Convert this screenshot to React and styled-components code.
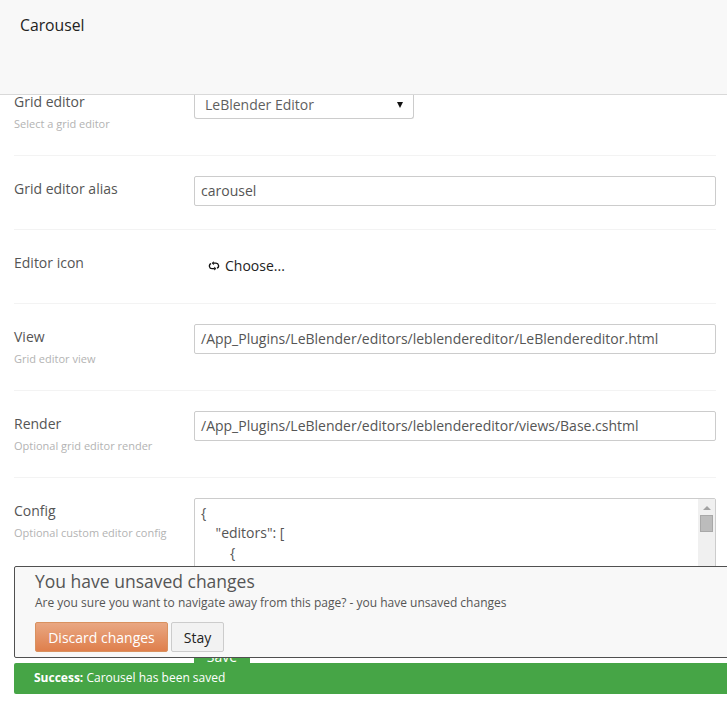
import React from "react";
import styled, { createGlobalStyle } from "styled-components";

const Global = createGlobalStyle`
  html, body { margin: 0; padding: 0; width: 727px; height: 716px; overflow: hidden; background: #fff; }
  * { box-sizing: border-box; }
  body { font-family: "Open Sans", "Liberation Sans", sans-serif; font-size: 14px; color: #515151; }
`;
const Page = styled.div`
  position: relative; width: 727px; height: 716px; overflow: hidden;
  display: flex; flex-direction: column;
`;
const Header = styled.header`
  flex: none; height: 95px; background: #f8f8f8; border-bottom: 1px solid #d9d9d9;
  padding: 15px 20px; font-size: 15.75px; line-height: 20px; color: #222; position: relative; z-index: 1;
`;
const Form = styled.main`
  flex: 1; min-height: 0; overflow: hidden; padding: 0 11px 0 14px;
`;
const Row = styled.section`
  display: grid; grid-template-columns: 180px 1fr; height: ${p => p.$h}px;
  padding-top: ${p => p.$top}px; border-bottom: ${p => (p.$last ? "none" : "1px solid #f3f3f3")};
`;
const LabelCol = styled.div`display: flex; flex-direction: column; margin-top: ${p => p.$offset}px;`;
const Label = styled.label`font-size: 14px; line-height: 20px; color: #555;`;
const Hint = styled.small`font-size: 11px; line-height: 16px; margin-top: 4px; color: #b3b3b3;`;
const SelectBox = styled.div`
  width: 220px; height: 24px; padding: 0 10px 4px; display: flex; align-items: center; justify-content: space-between;
  border: 1px solid #ccc; border-top: none; border-radius: 0 0 3px 3px; background: #fff; color: #5f5f5f; font-size: 14px; line-height: 20px;
`;
const Caret = styled.span`width: 0; height: 0; border: 3.5px solid transparent; border-top: 6px solid #111; border-bottom: 0;`;
const Field = styled.div`
  height: 30px; border: 1px solid #ccc; border-radius: 2px; padding: 0 6px 1px;
  display: flex; align-items: center; font-size: 14px; color: #555; white-space: nowrap; overflow: hidden;
`;
const IconButton = styled.div`
  display: flex; align-items: center; gap: 5px; padding: 1px 0 0 14px; height: 30px; color: #222; font-size: 14px;
`;
const CodeBox = styled.div`
  display: flex; height: 152px; border: 1px solid #ccc; border-radius: 2px; overflow: hidden;
`;
const Code = styled.pre`
  flex: 1; margin: 0; padding: 4px 6px; font-family: "Open Sans", "Liberation Sans", sans-serif; font-size: 14px; line-height: 20px; color: #555;
`;
const Scrollbar = styled.div`
  flex: none; width: 17px; background: #f0f0f0; display: flex; flex-direction: column; align-items: center; padding-top: 7px;
`;
const ArrowUp = styled.span`width: 0; height: 0; border: 4px solid transparent; border-bottom: 4px solid #a3a3a3; border-top: 0;`;
const Thumb = styled.span`width: 13px; height: 17px; margin-top: 5px; background: #bcbcbc; border: 1px solid #a8a8a8;`;
const SaveButton = styled.div`
  width: 56px; height: 30px; background: #46a546; color: #fff; font-size: 14px; line-height: 14px; text-align: center;
`;
const Notices = styled.div`
  position: absolute; left: 14px; top: 566px; width: 720px; display: flex; flex-direction: column; gap: 5px; z-index: 2;
`;
const Dialog = styled.div`
  height: 92px; border: 1px solid #505050; border-radius: 2px; background: #f8f8f8; padding: 2px 20px 0;
`;
const DialogTitle = styled.h4`margin: 0; font-weight: 400; font-size: 17.5px; line-height: 25px; color: #555;`;
const DialogText = styled.p`margin: 0; font-size: 12px; line-height: 18px; color: #555;`;
const Actions = styled.div`display: flex; gap: 3px; margin-top: 10px;`;
const Button = styled.button`
  height: 30px; padding: 0; width: ${p => p.$w}px; border-radius: 2px; font-family: inherit; font-size: 14px; cursor: pointer;
  border: 1px solid ${p => (p.$primary ? "#d9915f" : "#ccc")};
  color: ${p => (p.$primary ? "#fff" : "#222")};
  background: ${p => (p.$primary ? "linear-gradient(#e9a782, #df7f4c)" : "#f2f2f2")};
`;
const Success = styled.div`
  height: 31px; background: #46a546; color: #fff; border-radius: 2px; padding: 0 20px; font-size: 12px; line-height: 30px;
`;

const SwapIcon = () => (
  <svg width="12" height="10" viewBox="0 0 12 10" fill="none" stroke="#111" strokeWidth="1.3">
    <path d="M5.5 2.2H8a2.6 2.6 0 0 1 1 5" />
    <path d="M6.5 7.6H4a2.6 2.6 0 0 1-1-5" />
    <path d="M5.6.8v2.8L3.9 2.2ZM6.4 6.2V9l1.7-1.4Z" fill="#111" strokeWidth="0.6" />
  </svg>
);

export default function App() {
  return (
    <Page>
      <Global />
      <Header>Carousel</Header>
      <Form>
        <Row $h={61} $top={0}>
          <LabelCol $offset={-3}>
            <Label>Grid editor</Label>
            <Hint>Select a grid editor</Hint>
          </LabelCol>
          <div>
            <SelectBox>LeBlender Editor<Caret /></SelectBox>
          </div>
        </Row>
        <Row $h={74} $top={20}>
          <LabelCol $offset={3}><Label>Grid editor alias</Label></LabelCol>
          <Field>carousel</Field>
        </Row>
        <Row $h={74} $top={20}>
          <LabelCol $offset={3}><Label>Editor icon</Label></LabelCol>
          <IconButton><SwapIcon />Choose...</IconButton>
        </Row>
        <Row $h={87} $top={20}>
          <LabelCol $offset={3}>
            <Label>View</Label>
            <Hint>Grid editor view</Hint>
          </LabelCol>
          <Field>/App_Plugins/LeBlender/editors/leblendereditor/LeBlendereditor.html</Field>
        </Row>
        <Row $h={87} $top={20}>
          <LabelCol $offset={3}>
            <Label>Render</Label>
            <Hint>Optional grid editor render</Hint>
          </LabelCol>
          <Field>/App_Plugins/LeBlender/editors/leblendereditor/views/Base.cshtml</Field>
        </Row>
        <Row $h={200} $top={20} $last>
          <LabelCol $offset={3}>
            <Label>Config</Label>
            <Hint>Optional custom editor config</Hint>
          </LabelCol>
          <div>
            <CodeBox>
              <Code>{"{\n    \"editors\": [\n        {"}</Code>
              <Scrollbar><ArrowUp /><Thumb /></Scrollbar>
            </CodeBox>
            <SaveButton>Save</SaveButton>
          </div>
        </Row>
      </Form>
      <Notices>
        <Dialog>
          <DialogTitle>You have unsaved changes</DialogTitle>
          <DialogText>Are you sure you want to navigate away from this page? - you have unsaved changes</DialogText>
          <Actions>
            <Button $primary $w={133}>Discard changes</Button>
            <Button $w={53}>Stay</Button>
          </Actions>
        </Dialog>
        <Success><b>Success:</b> Carousel has been saved</Success>
      </Notices>
    </Page>
  );
}
